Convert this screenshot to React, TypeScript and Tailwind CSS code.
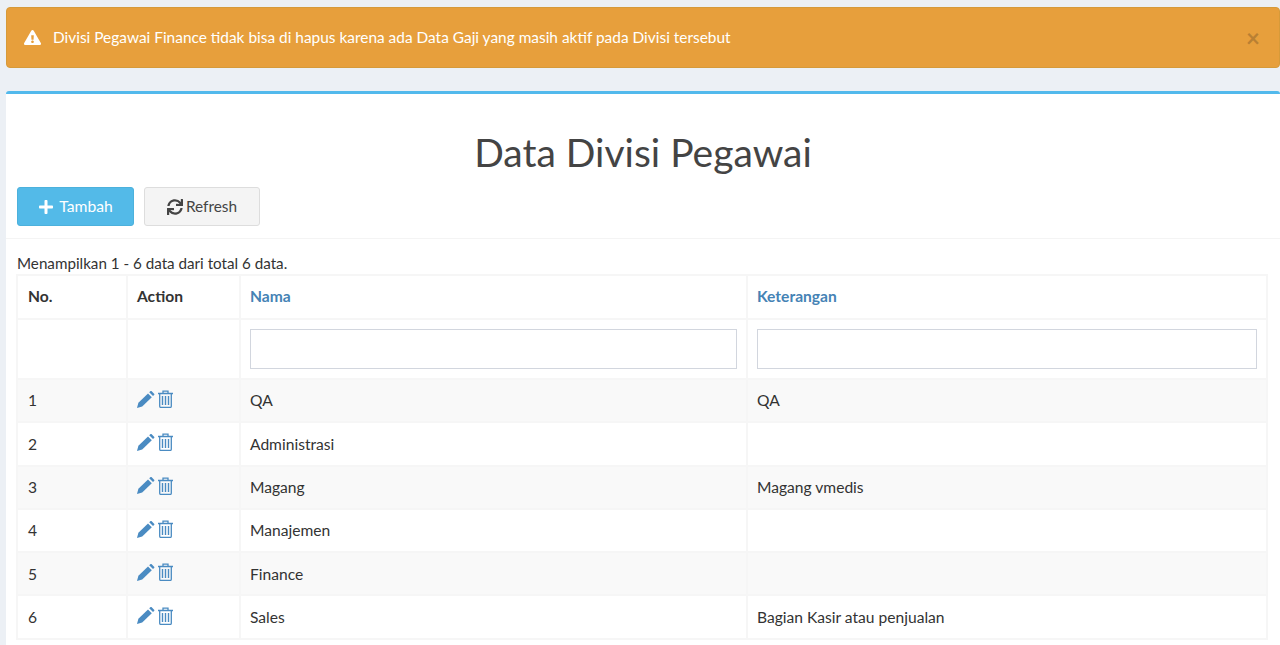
import { FaExclamationTriangle, FaPlus, FaSync } from "react-icons/fa";

const rows = [
  { no: 1, nama: "QA", ket: "QA" },
  { no: 2, nama: "Administrasi", ket: "" },
  { no: 3, nama: "Magang", ket: "Magang vmedis" },
  { no: 4, nama: "Manajemen", ket: "" },
  { no: 5, nama: "Finance", ket: "" },
  { no: 6, nama: "Sales", ket: "Bagian Kasir atau penjualan" },
];

function PencilIcon() {
  return (
    <svg width="18" height="17" viewBox="0 0 18 17" fill="currentColor">
      <path d="M0 17l1.4-5.2L11 2.4l3.8 3.8-9.6 9.4z" />
      <path d="M12.2 1.3L13.3.3c.4-.4 1-.4 1.4 0l2.4 2.4c.4.4.4 1 0 1.4L16 5.1z" />
    </svg>
  );
}

function TrashIcon() {
  return (
    <svg width="15" height="18" viewBox="0 0 15 18" fill="none" stroke="currentColor">
      <path d="M0 3.5h15" strokeWidth="1.5" />
      <path d="M5 3V1.2h5V3" strokeWidth="1.3" />
      <path d="M1.7 4v12.2c0 .7.5 1.2 1.1 1.2h9.4c.6 0 1.1-.5 1.1-1.2V4" strokeWidth="1.3" />
      <path d="M4.5 6v9M7.5 6v9M10.5 6v9" strokeWidth="1.4" />
    </svg>
  );
}

export default function App() {
  return (
    <div className="min-h-[645px] bg-[#ecf0f5] pt-[7px] pl-[6px] font-['Lato',sans-serif] text-[#333]">
      {/* alert */}
      <div className="flex h-[61px] items-center rounded-[4px] border border-[#d69a3a] bg-[#e79f3c] pl-[17px] pr-[19px] text-white">
        <FaExclamationTriangle className="h-[17px] w-[17px]" />
        <span className="ml-[12px] text-[15.43px]">Divisi Pegawai Finance tidak bisa di hapus karena ada Data Gaji yang masih aktif pada Divisi tersebut</span>
        <span className="ml-auto text-[24px] font-bold leading-none text-[#b98033]">×</span>
      </div>

      {/* box */}
      <div className="mt-[23px] rounded-t-[3px] border-t-[3px] border-[#52b9ec] bg-white pb-[8px]">
        <h1 className="pt-[33px] text-center text-[39px] leading-[50px] text-[#444]">Data Divisi Pegawai</h1>
        <div className="flex gap-[10px] border-b border-[#f4f4f4] pb-[12px] pl-[11px] pt-[10px]">
          <button className="flex h-[39px] w-[117px] items-center justify-center gap-[5px] rounded-[3px] border border-[#4cb1dc] bg-[#53bae8] pt-[1px] text-[15.7px] text-white">
            <FaPlus className="h-[16px] w-[16px]" /> Tambah
          </button>
          <button className="flex h-[39px] w-[116px] items-center justify-center gap-[3px] rounded-[3px] border border-[#ddd] bg-[#f4f4f4] pt-[1px] text-[15.4px] text-[#444]">
            <FaSync className="h-[16px] w-[16px]" /> Refresh
          </button>
        </div>
        <div className="pl-[11px] pt-[14px]">
          <p className="h-[22px] text-[15.2px] leading-[20px]">Menampilkan 1 - 6 data dari total 6 data.</p>
          <table className="-ml-[1px] -mt-[1px] w-[1250px] table-fixed border-collapse text-[15.6px]">
            <thead>
              <tr className="h-[44px] font-bold">
                <th className="w-[110px] border-2 border-[#f6f6f6] pl-[10px] text-left">No.</th>
                <th className="w-[113px] border-2 border-[#f6f6f6] px-[9px] text-left">Action</th>
                <th className="w-[507px] border-2 border-[#f6f6f6] px-[9px] text-left text-[#4583b5]">Nama</th>
                <th className="w-[520px] border-2 border-[#f6f6f6] px-[9px] text-left text-[#4583b5]">Keterangan</th>
              </tr>
              <tr className="h-[60px]">
                <td className="border-2 border-[#f6f6f6]"></td>
                <td className="border-2 border-[#f6f6f6]"></td>
                <td className="border-2 border-[#f6f6f6] px-[9px]">
                  <input className="block h-[40px] w-full border border-[#d2d6de] bg-white" />
                </td>
                <td className="border-2 border-[#f6f6f6] px-[9px]">
                  <input className="block h-[40px] w-full border border-[#d2d6de] bg-white" />
                </td>
              </tr>
            </thead>
            <tbody>
              {rows.map((r) => (
                <tr key={r.no} className="h-[43.3px] odd:bg-[#f9f9f9]">
                  <td className="border-2 border-[#f6f6f6] pl-[10px] pt-[1px]">{r.no}</td>
                  <td className="border-2 border-[#f6f6f6] px-[9px]">
                    <div className="flex items-center gap-[3px] pb-[3px] text-[#4a8bc2]">
                      <PencilIcon />
                      <TrashIcon />
                    </div>
                  </td>
                  <td className="border-2 border-[#f6f6f6] px-[9px] pt-[1px]">{r.nama}</td>
                  <td className="border-2 border-[#f6f6f6] px-[9px] pt-[1px]">{r.ket}</td>
                </tr>
              ))}
            </tbody>
          </table>
        </div>
      </div>
    </div>
  );
}
